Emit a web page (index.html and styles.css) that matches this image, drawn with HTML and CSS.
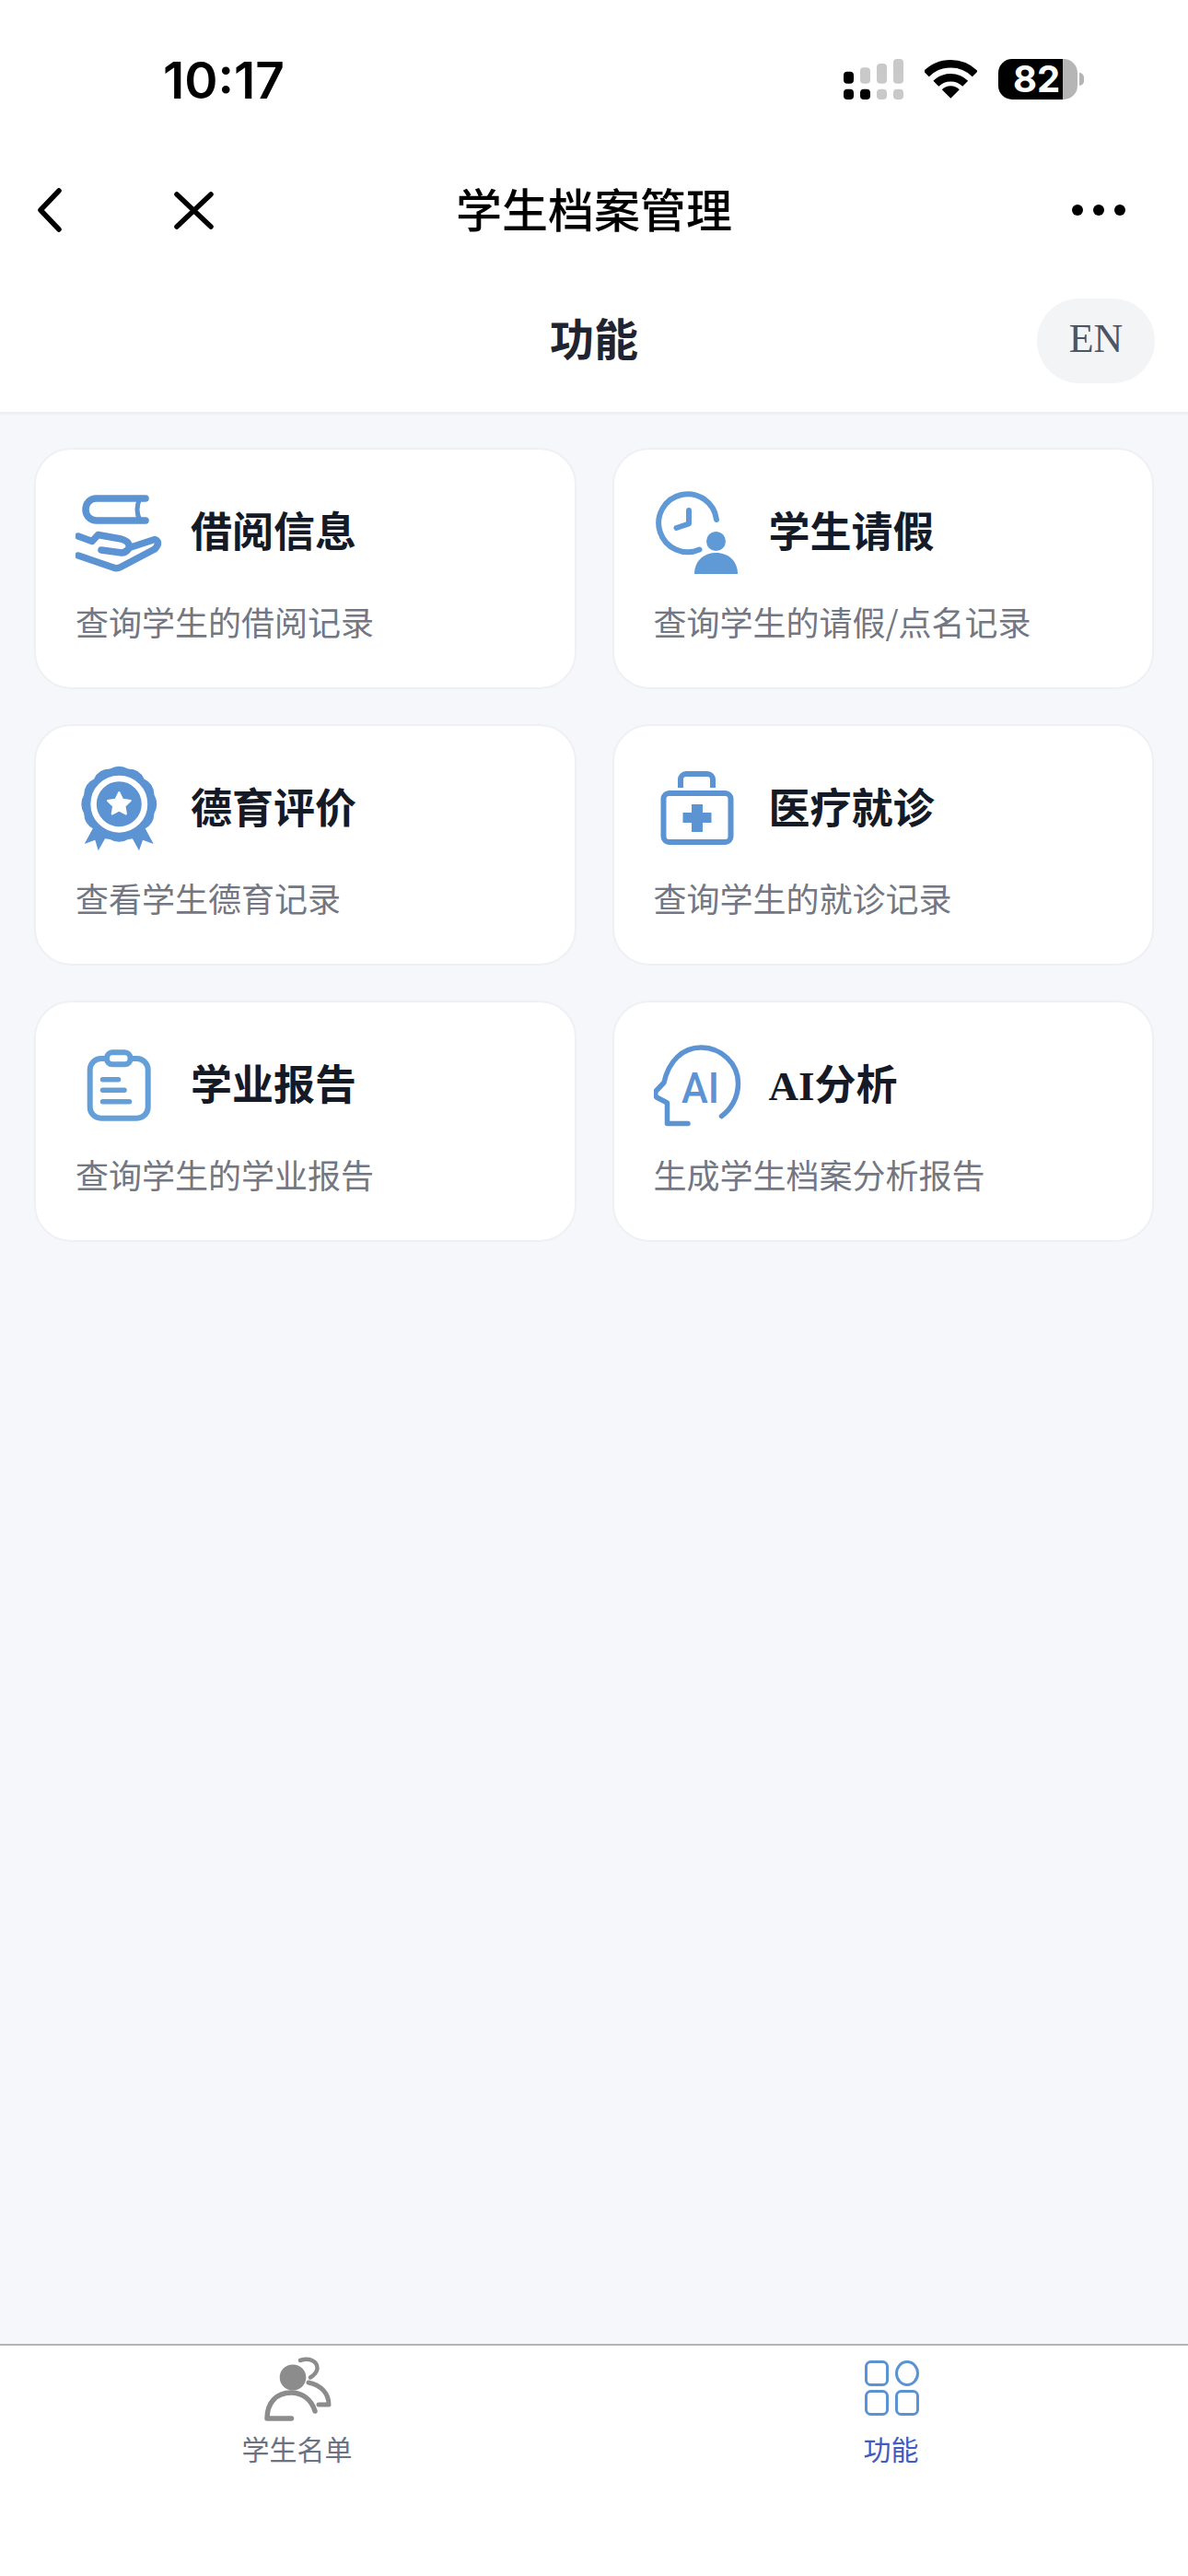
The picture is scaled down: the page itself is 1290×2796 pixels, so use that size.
FILE: index.html
```html
<!DOCTYPE html>
<html lang="zh-CN">

<head>
    <meta charset="UTF-8">
    <meta name="viewport" content="width=device-width, initial-scale=1.0">
    <title>学生档案管理</title>
    <link rel="stylesheet" href="styles.css">
</head>

<body>
    <div class="status-bar">
        <span class="time">10:17</span>
        <div class="status-icons">
            <svg class="signal" width="65" height="44" viewBox="0 0 65 44">
                <rect x="0" y="13.7" width="11" height="13" rx="4" fill="#000" />
                <rect x="18" y="9.3" width="11" height="17.4" rx="4" fill="#c9c9c9" />
                <rect x="36" y="5" width="11" height="21.7" rx="4" fill="#c9c9c9" />
                <rect x="54" y="0" width="11" height="26.7" rx="4" fill="#c9c9c9" />
                <rect x="0" y="32.7" width="11" height="11.3" rx="4" fill="#000" />
                <rect x="18" y="32.7" width="11" height="11.3" rx="4" fill="#000" />
                <rect x="36" y="32.7" width="11" height="11.3" rx="4" fill="#c9c9c9" />
                <rect x="54" y="32.7" width="11" height="11.3" rx="4" fill="#c9c9c9" />
            </svg>
            <svg class="wifi" width="57" height="42" viewBox="0 0 57 42">
                <path d="M1.8 15.2A37.5 37.5 0 0 1 54.8 15.2M12.4 25.8A22.5 22.5 0 0 1 44.2 25.8" fill="none" stroke="#000" stroke-width="8.4" />
                <path d="M28.3 41.7L18.8 32.2A13.4 13.4 0 0 1 37.8 32.2Z" fill="#000" />
            </svg>
            <div class="battery">
                <span class="battery-body">82</span>
                <span class="battery-nub"></span>
            </div>
        </div>
    </div>

    <div class="nav-bar">
        <div class="nav-left">
            <svg class="nav-back" width="27" height="48" viewBox="0 0 27 48">
                <path d="M24 3L4 24L24 45" fill="none" stroke="#000" stroke-width="5.5" stroke-linecap="round" stroke-linejoin="round" />
            </svg>
            <svg class="nav-close" width="43" height="41" viewBox="0 0 43 41">
                <path d="M3 3L40 38M40 3L3 38" fill="none" stroke="#000" stroke-width="5.5" stroke-linecap="round" />
            </svg>
        </div>
        <div class="nav-title">学生档案管理</div>
        <div class="nav-right">
            <span class="dot"></span>
            <span class="dot"></span>
            <span class="dot"></span>
        </div>
    </div>

    <div class="page-header">
        <h1 class="page-title">功能</h1>
        <span class="lang-btn">EN</span>
    </div>

    <div class="content">
        <div class="card">
            <div class="card-head">
                <svg class="card-icon" viewBox="0 0 100 100">
                    <g fill="none" stroke="#5b93d3" stroke-width="7.5" stroke-linecap="round" stroke-linejoin="round">
                        <path d="M76 14H23C7 14 7 38 23 38H76" />
                        <path d="M70 14Q64 26 70 38" stroke-width="5" />
                        <path d="M3 55L18 60.5L24.5 53.5L49.5 58Q60 61 58 68Q55 73 50 73L28 70" />
                        <path d="M3 76L41 89Q45 90.5 49 88.5L86 69Q93 61 86 58.5L60 67" />
                    </g>
                </svg>
                <span class="card-title">借阅信息</span>
            </div>
            <p class="card-desc">查询学生的借阅记录</p>
        </div>

        <div class="card">
            <div class="card-head">
                <svg class="card-icon" viewBox="0 0 100 100">
                    <g fill="none" stroke="#5f9ad6" stroke-width="6" stroke-linecap="round" stroke-linejoin="round">
                        <path d="M68 37A31.5 31.5 0 1 0 49.5 69.5" />
                        <path d="M38 27V41.5L24.5 46" />
                    </g>
                    <circle cx="67.5" cy="60.5" r="10.5" fill="#5f9ad6" />
                    <path d="M44 96C44 82 54 73 67.5 73C81 73 91 82 91 96Z" fill="#5f9ad6" />
                </svg>
                <span class="card-title">学生请假</span>
            </div>
            <p class="card-desc">查询学生的请假/点名记录</p>
        </div>

        <div class="card">
            <div class="card-head">
                <svg class="card-icon" viewBox="0 0 100 100">
                    <path d="M20 70L9.7 89L21.3 84.7L24.7 96.3L35 78ZM74.5 70L84.7 89L73 84.7L69 96.3L59 78Z" fill="#5b93d3" />
                    <path d="M37.34 7.5Q47.3 2 57.26 7.5Q69.8 7.5 74.5 18.5Q85 23.2 85.5 35.74Q91 45.7 85.5 55.66Q85 68.2 74.5 72.9Q69.8 84 57.26 83.9Q47.3 89.5 37.34 83.9Q24.8 84 20.1 72.9Q9.6 68.2 9.1 55.66Q3.6 45.7 9.1 35.74Q9.6 23.2 20.1 18.5Q24.8 7.5 37.34 7.5Z" fill="#5b93d3" />
                    <circle cx="47.3" cy="45.7" r="27.7" fill="none" stroke="#fff" stroke-width="6.5" />
                    <path d="M47.3 33L51.1 40.7L59.7 42L53.5 48L54.9 56.5L47.3 52.5L39.7 56.5L41.1 48L34.9 42L43.5 40.7Z" fill="#fff" stroke="#fff" stroke-width="2" stroke-linejoin="round" />
                </svg>
                <span class="card-title">德育评价</span>
            </div>
            <p class="card-desc">查看学生德育记录</p>
        </div>

        <div class="card">
            <div class="card-head">
                <svg class="card-icon" viewBox="0 0 100 100">
                    <g fill="none" stroke="#5b93d3" stroke-width="6">
                        <rect x="10.5" y="34" width="73" height="53" rx="6" />
                        <path d="M29 28V19A6 6 0 0 1 35 13H58A6 6 0 0 1 64 19V28" />
                    </g>
                    <path d="M41 46H53V55H62.5V66H53V76H41V66H31.5V55H41Z" fill="#5b93d3" />
                </svg>
                <span class="card-title">医疗就诊</span>
            </div>
            <p class="card-desc">查询学生的就诊记录</p>
        </div>

        <div class="card">
            <div class="card-head">
                <svg class="card-icon" viewBox="0 0 100 100">
                    <g fill="none" stroke="#659fd8" stroke-width="6" stroke-linecap="round">
                        <rect x="15.7" y="22" width="63" height="64.7" rx="12" />
                        <rect x="34" y="15.3" width="25.5" height="13" rx="6" fill="#fff" />
                        <path d="M29.5 44.7H46.5M29.5 56.3H53M29.5 68.7H58.5" stroke-width="5.5" />
                    </g>
                </svg>
                <span class="card-title">学业报告</span>
            </div>
            <p class="card-desc">查询学生的学业报告</p>
        </div>

        <div class="card">
            <div class="card-head">
                <svg class="card-icon" viewBox="0 0 100 100">
                    <path d="M73.5 84.5C84 77 91.5 64 91.5 49C91.5 27 73 10 51 10C31 10 16 25 11 48L2.5 57Q0.5 61 3 64L14.5 70V92.5H37" fill="none" stroke="#5b93d3" stroke-width="5.5" stroke-linecap="round" stroke-linejoin="round" />
                    <text class="ai-mark" x="30" y="70" textLength="41" lengthAdjust="spacingAndGlyphs">AI</text>
                </svg>
                <span class="card-title">AI分析</span>
            </div>
            <p class="card-desc">生成学生档案分析报告</p>
        </div>
    </div>

    <div class="tab-bar">
        <div class="tab">
            <svg class="tab-icon" viewBox="0 0 80 80">
                <ellipse cx="35" cy="27.5" rx="14.3" ry="14" fill="#8c8c8c" />
                <g fill="none" stroke="#8c8c8c" stroke-linecap="round" stroke-linejoin="round">
                    <path d="M59 64C55 51 45 44 33 44C17 44 7 55 7 72H33.5" stroke-width="5.5" />
                    <path d="M43 9C52 6 62 9 61.5 18C61 22 58 25 54 27.5" stroke-width="4.5" />
                    <path d="M52 33C66 36 74 45 74 57H63" stroke-width="5" />
                </g>
            </svg>
            <span class="tab-label">学生名单</span>
        </div>
        <div class="tab tab-active">
            <svg class="tab-icon" viewBox="0 0 80 80">
                <g fill="none" stroke="#5a93d2" stroke-width="3">
                    <rect x="12.5" y="10.5" width="23" height="25" rx="5" />
                    <ellipse cx="57" cy="23" rx="11.5" ry="12.5" />
                    <rect x="12.5" y="42.5" width="23" height="25" rx="5" />
                    <rect x="45.5" y="42.5" width="23" height="25" rx="5" />
                </g>
            </svg>
            <span class="tab-label">功能</span>
        </div>
    </div>
</body>

</html>
```

FILE: styles.css
```css
* {
    box-sizing: border-box;
}

body {
    margin: 0;
    height: 2796px;
    display: flex;
    flex-direction: column;
    background: #f6f7fb;
    font-family: "Noto Sans CJK SC", sans-serif;
}

/* status bar */
.status-bar {
    height: 172px;
    padding: 2px 113px 0 177px;
    display: flex;
    align-items: center;
    justify-content: space-between;
    background: #fff;
}

.time {
    font-family: Inter, sans-serif;
    font-size: 55px;
    font-weight: 600;
    color: #000;
}

.status-icons {
    display: flex;
    align-items: center;
    gap: 23px;
    margin-top: -2px;
}

.battery {
    display: flex;
    align-items: center;
    gap: 2px;
}

.battery-body {
    width: 86px;
    height: 44px;
    padding-left: 16px;
    border-radius: 15px;
    background: linear-gradient(90deg, #000 70px, #b5b5b5 70px);
    color: #fff;
    font-family: Inter, sans-serif;
    font-size: 40px;
    font-weight: 700;
    line-height: 44px;
}

.battery-nub {
    width: 5px;
    height: 14px;
    border-radius: 0 5px 5px 0;
    background: #b5b5b5;
}

/* nav */
.nav-bar {
    height: 112px;
    display: grid;
    grid-template-columns: 1fr auto 1fr;
    align-items: center;
    background: #fff;
}

.nav-left {
    display: flex;
    align-items: center;
    gap: 122px;
    padding-left: 40px;
}

.nav-title {
    padding-bottom: 6px;
    font-size: 50px;
    font-weight: 500;
    color: #000;
}

.nav-right {
    display: flex;
    justify-content: flex-end;
    gap: 11px;
    padding-right: 68px;
}

.dot {
    width: 12px;
    height: 12px;
    border-radius: 50%;
    background: #000;
}

/* page header */
.page-header {
    position: relative;
    height: 166px;
    padding: 40px 36px 31px;
    display: flex;
    justify-content: flex-end;
    background: #fff;
    border-bottom: 3px solid #eff0f4;
}

.page-title {
    position: absolute;
    top: 41px;
    left: 0;
    right: 0;
    margin: 0;
    text-align: center;
    font-size: 48px;
    font-weight: 700;
    line-height: 80px;
    color: #1f2430;
}

.lang-btn {
    position: relative;
    width: 128px;
    height: 92px;
    border-radius: 46px;
    background: #f3f4f6;
    text-align: center;
    font-family: "Liberation Serif", serif;
    font-size: 44px;
    line-height: 88px;
    color: #4b5563;
}

/* cards */
.content {
    flex: 1;
    padding: 36px 37px 0;
    display: grid;
    grid-template-columns: 1fr 1fr;
    grid-auto-rows: 262px;
    align-content: start;
    gap: 38px 39px;
}

.card {
    padding: 39px 43px 0;
    background: #fff;
    border: 2px solid #eff0f4;
    border-radius: 40px;
}

.card-head {
    display: flex;
    align-items: center;
    gap: 25px;
}

.card-icon {
    width: 100px;
    height: 100px;
    flex-shrink: 0;
}

.card-title {
    padding-bottom: 6px;
    font-family: "Liberation Serif", "Noto Sans CJK SC", serif;
    font-size: 45px;
    font-weight: 700;
    color: #141a26;
}

.card-desc {
    margin: 19px 0 0;
    font-size: 36px;
    line-height: 56px;
    color: #727783;
}

.ai-mark {
    font-family: Roboto, sans-serif;
    font-size: 47px;
    font-weight: 500;
    fill: #5b93d3;
}

/* tab bar */
.tab-bar {
    height: 252px;
    padding-top: 7px;
    display: flex;
    background: #fff;
    border-top: 2px solid #b4b4b4;
}

.tab {
    flex: 1;
    display: flex;
    flex-direction: column;
    align-items: center;
}

.tab-icon {
    width: 80px;
    height: 80px;
}

.tab-label {
    margin-top: 4px;
    font-size: 30px;
    line-height: 40px;
    color: #6b7280;
}

.tab-active .tab-label {
    color: #3f5bc4;
}
```
